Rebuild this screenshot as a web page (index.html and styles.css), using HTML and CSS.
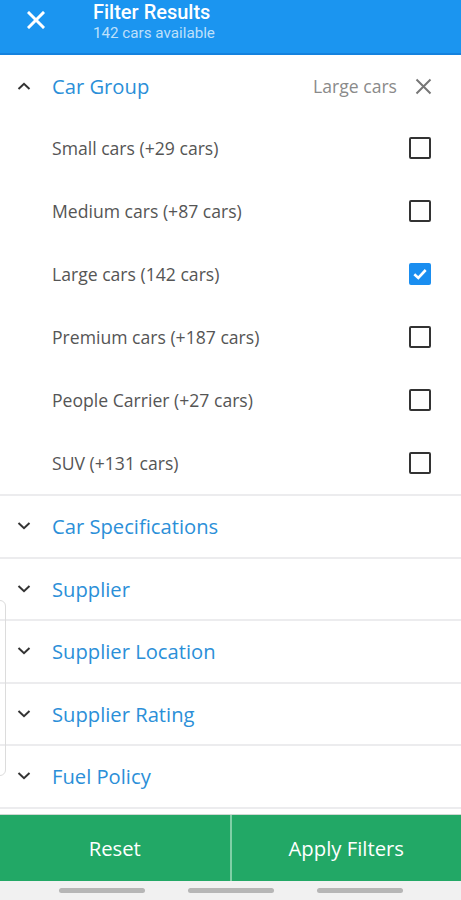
FILE: index.html
```html
<!DOCTYPE html>
<html>
<head>
<meta charset="utf-8">
<link rel="stylesheet" href="styles.css">
</head>
<body>
<div class="screen">
  <header class="topbar">
    <div class="close-btn">
      <svg width="18" height="18" viewBox="0 0 18 18"><path d="M2 2 L16 16 M16 2 L2 16" stroke="#fff" stroke-width="3" stroke-linecap="square"/></svg>
    </div>
    <div class="titles">
      <div class="title">Filter Results</div>
      <div class="subtitle">142 cars available</div>
    </div>
  </header>

  <main class="list">
    <section class="group open">
      <div class="group-head first">
        <span class="chev"><svg width="14" height="8" viewBox="0 0 14 8"><path d="M1.5 7 L7 1.8 L12.5 7" fill="none" stroke="#333" stroke-width="2"/></svg></span>
        <span class="group-title">Car Group</span>
        <span class="selected">Large cars</span>
        <span class="clear"><svg width="17" height="17" viewBox="0 0 17 17"><path d="M1.5 1.5 L15.5 15.5 M15.5 1.5 L1.5 15.5" stroke="#777" stroke-width="2"/></svg></span>
      </div>
      <div class="option"><span class="opt-label">Small cars (+29 cars)</span><span class="box"></span></div>
      <div class="option"><span class="opt-label">Medium cars (+87 cars)</span><span class="box"></span></div>
      <div class="option"><span class="opt-label">Large cars (142 cars)</span><span class="box checked"><svg width="18" height="18" viewBox="0 0 18 18"><path d="M3.3 9.3 L7.3 13 L14.7 5" fill="none" stroke="#fff" stroke-width="2.6"/></svg></span></div>
      <div class="option"><span class="opt-label">Premium cars (+187 cars)</span><span class="box"></span></div>
      <div class="option"><span class="opt-label">People Carrier (+27 cars)</span><span class="box"></span></div>
      <div class="option"><span class="opt-label">SUV (+131 cars)</span><span class="box"></span></div>
    </section>
    <section class="group"><div class="group-head"><span class="chev"><svg width="14" height="8" viewBox="0 0 14 8"><path d="M1.5 1 L7 6.2 L12.5 1" fill="none" stroke="#333" stroke-width="2"/></svg></span><span class="group-title">Car Specifications</span></div></section>
    <section class="group"><div class="group-head"><span class="chev"><svg width="14" height="8" viewBox="0 0 14 8"><path d="M1.5 1 L7 6.2 L12.5 1" fill="none" stroke="#333" stroke-width="2"/></svg></span><span class="group-title">Supplier</span></div></section>
    <section class="group"><div class="group-head"><span class="chev"><svg width="14" height="8" viewBox="0 0 14 8"><path d="M1.5 1 L7 6.2 L12.5 1" fill="none" stroke="#333" stroke-width="2"/></svg></span><span class="group-title">Supplier Location</span></div></section>
    <section class="group"><div class="group-head"><span class="chev"><svg width="14" height="8" viewBox="0 0 14 8"><path d="M1.5 1 L7 6.2 L12.5 1" fill="none" stroke="#333" stroke-width="2"/></svg></span><span class="group-title">Supplier Rating</span></div></section>
    <section class="group"><div class="group-head"><span class="chev"><svg width="14" height="8" viewBox="0 0 14 8"><path d="M1.5 1 L7 6.2 L12.5 1" fill="none" stroke="#333" stroke-width="2"/></svg></span><span class="group-title">Fuel Policy</span></div></section>
    <div class="scroll-ghost"></div>
  </main>

  <footer class="actions">
    <div class="btn">Reset</div>
    <div class="divider"></div>
    <div class="btn">Apply Filters</div>
  </footer>
  <div class="navbar">
    <span class="pill"></span><span class="pill"></span><span class="pill"></span>
  </div>
</div>
</body>
</html>
```

FILE: styles.css
```css
* { box-sizing: border-box; }
html, body { margin: 0; padding: 0; background: #fff; }
.screen {
  width: 461px;
  height: 900px;
  display: flex;
  flex-direction: column;
  overflow: hidden;
  font-family: "Open Sans", "Liberation Sans", sans-serif;
}
.topbar {
  height: 55px;
  background: #1b95f0;
  border-bottom: 2px solid #1482de;
  display: flex;
  align-items: flex-start;
  flex: none;
}
.close-btn {
  width: 93px;
  height: 53px;
  display: flex;
  align-items: flex-start;
  padding: 11px 0 0 27px;
}
.titles {
  display: flex;
  flex-direction: column;
  font-family: Roboto, "Liberation Sans", sans-serif;
}
.title {
  color: #fff;
  font-size: 20px;
  font-weight: 500;
  line-height: 24px;
}
.subtitle {
  color: rgba(255,255,255,0.72);
  font-size: 15.2px;
  line-height: 18px;
}
.list {
  position: relative;
  flex: none;
}
.group {
  border-bottom: 2px solid #ececee;
}
.group-head {
  height: 60.5px;
  display: flex;
  align-items: center;
}
.group-head.first { height: 61px; }
.chev {
  width: 52px;
  display: flex;
  justify-content: flex-start;
  padding-left: 17px;
}
.group-title {
  color: #2b8fd8;
  font-size: 20.2px;
  flex: 1;
}
.selected {
  color: #8a8a8a;
  font-size: 17.6px;
  margin-right: 18px;
}
.clear {
  width: 46px;
  display: flex;
  padding-top: 2px;
}
.option {
  height: 63px;
  display: flex;
  align-items: center;
  padding-left: 52px;
  padding-right: 30px;
}
.opt-label {
  flex: 1;
  color: #555;
  font-size: 17.6px;
}
.box {
  width: 22px;
  height: 22px;
  border: 2px solid #333;
  border-radius: 2px;
  display: flex;
  align-items: center;
  justify-content: center;
}
.box.checked {
  background: #1a8ef0;
  border-color: #1a8ef0;
}
.scroll-ghost {
  position: absolute;
  left: -8px;
  top: 545px;
  width: 14px;
  height: 176px;
  border: 1px solid #dcdcdc;
  border-radius: 6px;
}
.actions {
  margin-top: 5px;
  height: 67px;
  border-top: 1px solid #cfd8d2;
  background: #22a866;
  display: flex;
  flex: none;
}
.btn {
  flex: 1;
  display: flex;
  align-items: center;
  justify-content: center;
  color: #fff;
  font-size: 20.3px;
}
.divider {
  width: 2px;
  background: #7fd0a6;
}
.navbar {
  flex: 1;
  background: #f1f1f1;
  display: flex;
  align-items: flex-start;
  padding-top: 7px;
  padding-left: 59px;
  gap: 43px;
}
.pill {
  width: 86px;
  height: 5px;
  border-radius: 3px;
  background: #b6b6b6;
}
```
